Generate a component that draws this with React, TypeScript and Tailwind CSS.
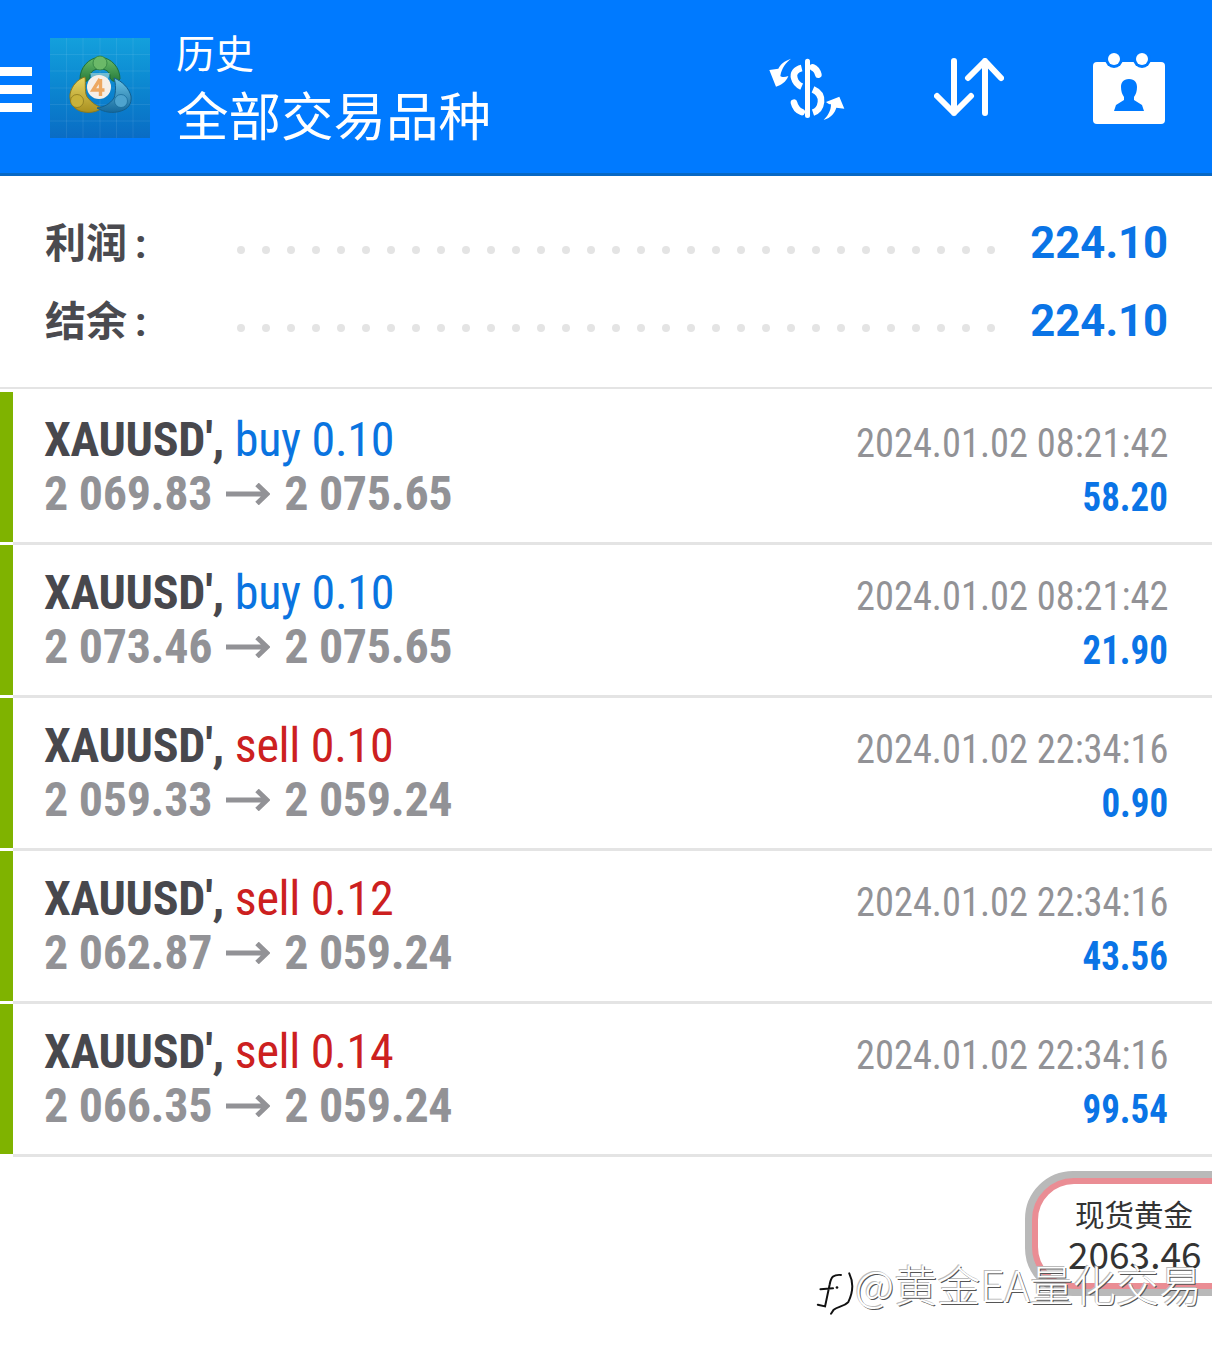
const deals = [
  { side: "buy", lots: "0.10", open: "2 069.83", close: "2 075.65", time: "2024.01.02 08:21:42", profit: "58.20" },
  { side: "buy", lots: "0.10", open: "2 073.46", close: "2 075.65", time: "2024.01.02 08:21:42", profit: "21.90" },
  { side: "sell", lots: "0.10", open: "2 059.33", close: "2 059.24", time: "2024.01.02 22:34:16", profit: "0.90" },
  { side: "sell", lots: "0.12", open: "2 062.87", close: "2 059.24", time: "2024.01.02 22:34:16", profit: "43.56" },
  { side: "sell", lots: "0.14", open: "2 066.35", close: "2 059.24", time: "2024.01.02 22:34:16", profit: "99.54" },
];

const cjk = "font-['Roboto','Noto_Sans_CJK_SC',sans-serif]";

function Logo() {
  return (
    <div className="w-[100px] h-[100px] shrink-0 bg-gradient-to-b from-[#14a0dc] to-[#0a6cc4]">
      <svg viewBox="0 0 100 100" className="w-full h-full">
        <defs>
          <linearGradient id="g-green" x1="0" y1="0" x2="0" y2="1">
            <stop offset="0" stopColor="#6cc06c" />
            <stop offset="1" stopColor="#25793a" />
          </linearGradient>
          <linearGradient id="g-yellow" x1="0" y1="0" x2="0" y2="1">
            <stop offset="0" stopColor="#e8d765" />
            <stop offset="1" stopColor="#a98f1e" />
          </linearGradient>
          <linearGradient id="g-blue" x1="0" y1="0" x2="0" y2="1">
            <stop offset="0" stopColor="#6fc6e6" />
            <stop offset="1" stopColor="#14689c" />
          </linearGradient>
        </defs>
        <path d="M0 16.5H100M0 33H100M0 50H100M0 66.5H100M0 83H100M16.5 0V100M33 0V100M50 0V100M66.5 0V100M83 0V100" stroke="#ffffff" strokeOpacity="0.1" strokeWidth="0.8" />
        <path d="M50 19C38 20 30 30 30 41C33 45 38 44 40 40C39 36 42 31 50 31C58 31 61 36 60 40C62 44 67 45 70 41C70 30 62 20 50 19Z" fill="url(#g-green)" stroke="#1f6f38" strokeWidth="1" />
        <path d="M40 35H60L58 41H42Z" fill="#d4e9d0" opacity="0.5" />
        <circle cx="50" cy="25" r="7" fill="#6bb968" stroke="#2f8040" strokeWidth="0.8" />
        <path d="M35 39C28 41 22 47 20 56C19 62 22 70 30 73C39 76 47 74 52 70C47 68 42 65 38 60C34 56 36 46 35 39Z" fill="url(#g-yellow)" stroke="#8b7a1e" strokeWidth="1" />
        <circle cx="27" cy="63" r="6.5" fill="#c9b23a" stroke="#8b7a1e" strokeWidth="0.8" />
        <path d="M64 40C72 43 79 50 81 58C82 66 78 71 71 73C62 76 54 74 47 70C54 69 60 66 64 60C66 54 66 46 64 40Z" fill="url(#g-blue)" stroke="#13608f" strokeWidth="1" />
        <circle cx="71" cy="63" r="6.5" fill="#4ea3ce" stroke="#1a6d9c" strokeWidth="0.8" />
        <circle cx="49" cy="49" r="12" fill="#f6efe8" />
        <path d="M50 41L43 52H54.5M50.5 41V58" fill="none" stroke="#eda861" strokeWidth="3.4" />
      </svg>
    </div>
  );
}

function HeaderIcons() {
  return (
    <div className="flex items-center gap-[88px] pr-[46px] pt-[3px]">
      <svg viewBox="0 0 285 255" className="w-[95px] h-[85px] -mr-[10px] -ml-[9px]">
        <path d="M90 38C70 45 58 55 52 68L25 72L45 122C60 118 75 108 82 90C72 94 62 94 58 90C62 65 75 50 90 38Z" fill="#ffffff" />
        <path d="M188 222C210 215 222 200 226 185L250 188L235 152L195 168C200 172 205 175 210 175C210 195 200 210 188 222Z" fill="#ffffff" />
        <rect x="132" y="38" width="15" height="178" rx="7.5" fill="#ffffff" />
        <g fill="none" stroke="#ffffff" strokeWidth="20" strokeLinecap="round">
          <path d="M122 66C105 70 95 82 100 97C103 110 113 118 122 122" strokeLinecap="butt" />
          <path d="M155 64C165 68 170 78 172 86" />
          <path d="M99 170C102 183 112 194 122 198" />
          <path d="M156 130C172 137 182 150 180 168C178 185 168 196 156 200" strokeLinecap="butt" />
        </g>
      </svg>
      <svg viewBox="0 0 70 60" className="w-[70px] h-[60px]" fill="none" stroke="#ffffff" strokeWidth="6" strokeLinecap="round" strokeLinejoin="round">
        <path d="M20 3V55M3 38L20 55L37 38" />
        <path d="M51 3V55M34 20L51 3L67 20" />
      </svg>
      <svg viewBox="0 0 74 72" className="w-[74px] h-[72px]">
        <rect x="1" y="10" width="72" height="62" rx="4" fill="#ffffff" />
        <circle cx="22" cy="7" r="9" fill="#007aff" />
        <circle cx="50" cy="7" r="9" fill="#007aff" />
        <circle cx="22" cy="7" r="6" fill="#ffffff" />
        <circle cx="50" cy="7" r="6" fill="#ffffff" />
        <path d="M37 27C43 27 45 31 45 35C45 39 44 42 42 45V48L50 53L52 59H22L24 53L32 48V45C30 42 29 39 29 35C29 31 31 27 37 27Z" fill="#007aff" />
      </svg>
    </div>
  );
}

function StatRow({ label, value }: { label: string; value: string }) {
  return (
    <div className="flex items-center h-[78px] pl-[45px] pr-[44px]">
      <span className={`w-[192px] shrink-0 pt-[3px] text-[41px] font-bold text-[#4a4a4f] ${cjk}`}>
        {label}
        <span className="ml-[8px]">:</span>
      </span>
      <div className="flex-1 mt-[14px] flex justify-between mr-[31px]">
        {Array.from({ length: 31 }).map((_, i) => (
          <span key={i} className="w-[8px] h-[8px] rounded-full bg-[#e4e4e4]" />
        ))}
      </div>
      <span className="text-[45px] font-bold text-[#0a74e6] font-['Roboto',sans-serif] origin-right scale-x-[0.97]">{value}</span>
    </div>
  );
}

function DealRow({ deal }: { deal: (typeof deals)[number] }) {
  const sideColor = deal.side === "buy" ? "text-[#0a74e0]" : "text-[#cc2020]";
  return (
    <div className="flex h-[153px]">
      <div className="w-[13px] h-[150px] shrink-0 bg-[#7fb300]" />
      <div className="flex flex-1 border-b-[3px] border-[#e4e4e4] pl-[31px] pr-[44px] pt-[21px] font-['Roboto',sans-serif] [font-stretch:75%]">
        <div className="flex-1 text-[48px] leading-[54px] tracking-[-0.3px]">
          <div className="font-bold text-[#48484d]">
            XAUUSD', <span className={`font-normal ${sideColor}`}>{deal.side} {deal.lots}</span>
          </div>
          <div className="font-bold text-[#929296] whitespace-nowrap">
            {deal.open}
            <svg viewBox="0 0 44 22" className="inline-block w-[44px] h-[22px] ml-[14px] mr-[14px] align-[5px]" fill="none" stroke="#929296" strokeWidth="5">
              <path d="M0 11H41M31 1.5L41 11L31 20.5" />
            </svg>
            {deal.close}
          </div>
        </div>
        <div className="flex flex-col items-end pt-[4px]">
          <div className="text-[40px] leading-[54px] text-[#929296] whitespace-nowrap origin-right scale-x-[0.96]">{deal.time}</div>
          <div className="text-[41px] leading-[53px] font-bold text-[#0a74e6] origin-right scale-x-[0.9]">{deal.profit}</div>
        </div>
      </div>
    </div>
  );
}

export default function App() {
  return (
    <div className="relative w-[1212px] h-[1354px] bg-white overflow-hidden">
      <header className="h-[176px] flex items-center justify-between bg-[#007aff] border-b-[3px] border-[#0868c4]">
        <div className="flex items-center pt-[3px]">
          <div className="w-[32px] flex flex-col gap-[9px] mr-[18px] pt-[2px]">
            <span className="h-[9px] bg-white" />
            <span className="h-[9px] bg-white" />
            <span className="h-[9px] bg-white" />
          </div>
          <Logo />
          <div className={`ml-[26px] pt-[6px] text-white ${cjk}`}>
            <div className="text-[39px] leading-[50px]">历史</div>
            <div className="text-[52.5px] leading-[70px] mt-[3px]">全部交易品种</div>
          </div>
        </div>
        <HeaderIcons />
      </header>
      <section className="h-[213px] pt-[28px] mb-[3px] border-b-[2px] border-[#e4e4e4]">
        <StatRow label="利润" value="224.10" />
        <StatRow label="结余" value="224.10" />
      </section>
      {deals.map((d, i) => (
        <DealRow key={i} deal={d} />
      ))}
      {/* floating quote widget */}
      <div className="absolute left-[1025px] top-[1171px] w-[240px] h-[125px] rounded-[48px] border-[7px] border-[#b9b9b9] bg-[#b9b9b9]">
        <div className="w-full h-full rounded-[42px] border-[6px] border-[#ea8d94] bg-white pl-[37px] font-['Noto_Sans_CJK_SC',sans-serif] text-[#333333]">
          <div className="text-[29.5px] leading-[40px] mt-[9px]">现货黄金</div>
          <div className="text-[37px] leading-[44px] -ml-[7px] -mt-[2px]">2063.46</div>
        </div>
      </div>
      {/* watermark */}
      <div className="absolute left-[813px] top-[1255px] flex items-center text-[43px] leading-[56px] text-white font-['Noto_Sans_CJK_SC',sans-serif] font-light [text-shadow:1px_1px_0_#555,-1px_-1px_0_#bbb]">
        <svg viewBox="25 45 120 145" className="w-[40px] h-[48px] mr-[2px] translate-x-[3px] translate-y-[11px]" fill="none" stroke="#111111" strokeWidth="6" strokeLinecap="round">
          <path d="M100 60C78 58 70 66 66 88L52 155L30 150M38 103L76 100" />
          <path d="M125 55C137 80 138 110 122 142C110 155 90 155 78 165L70 177" />
          <circle cx="88" cy="98" r="4" fill="#111111" stroke="none" />
        </svg>
        @黄金EA量化交易
      </div>
    </div>
  );
}
